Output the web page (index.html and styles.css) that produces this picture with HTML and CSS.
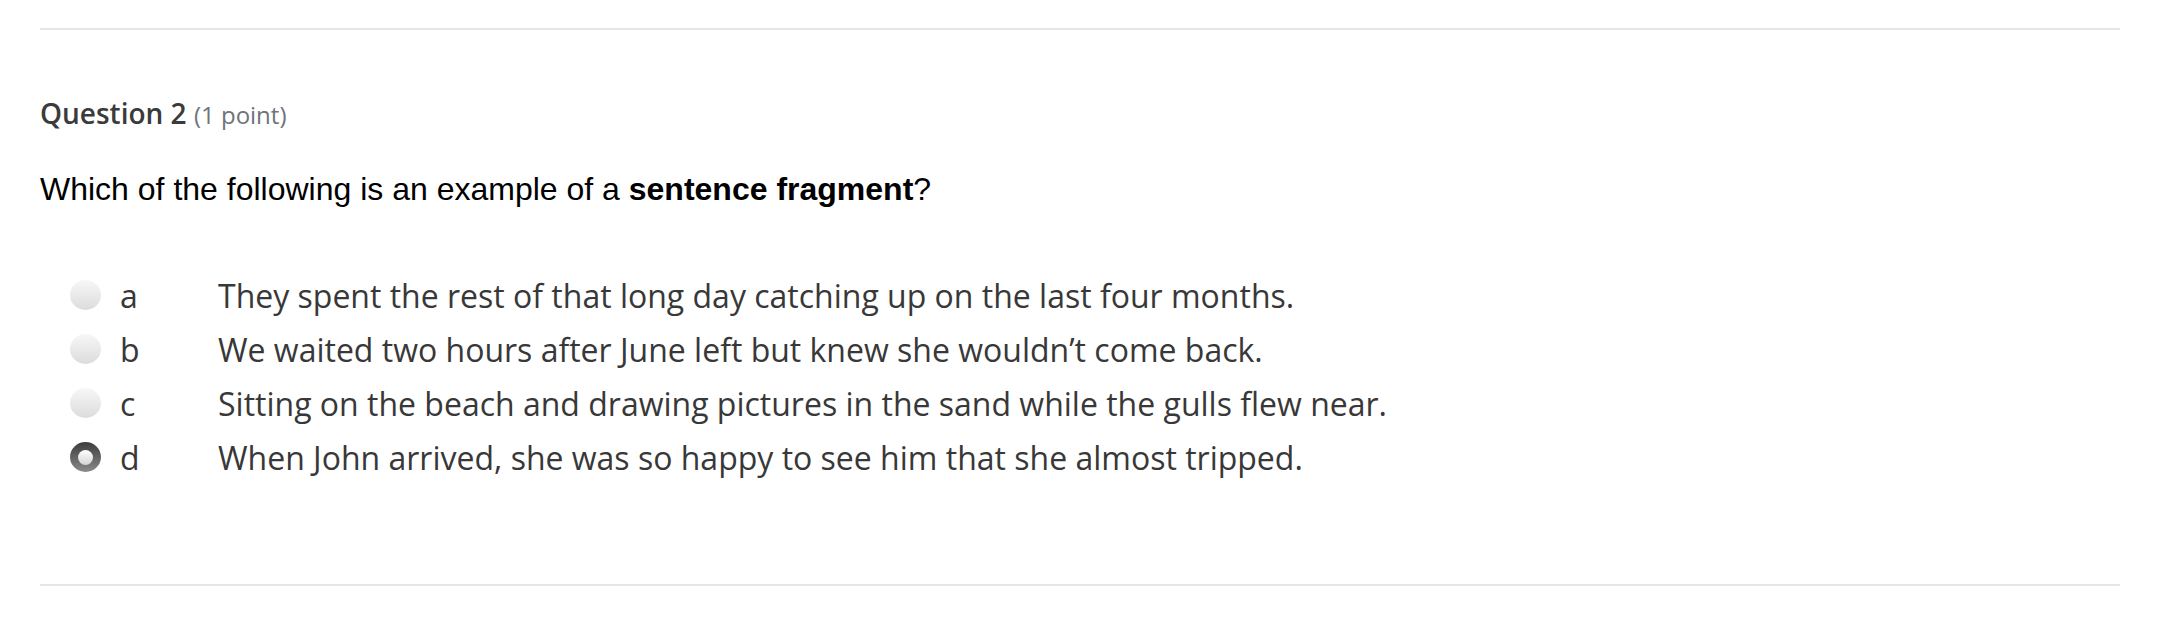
FILE: index.html
```html
<!DOCTYPE html>
<html lang="en">
<head>
<meta charset="utf-8">
<title>Question 2</title>
<link rel="stylesheet" href="styles.css">
</head>
<body>
<div class="quiz">
  <div class="rule"></div>
  <section class="question">
    <h2 class="q-title">Question 2 <span class="q-points">(1 point)</span></h2>
    <p class="q-text">Which of the following is an example of a <strong>sentence fragment</strong>?</p>
    <ul class="options">
      <li class="option"><span class="radio"></span><span class="letter">a</span><span class="answer">They spent the rest of that long day catching up on the last four months.</span></li>
      <li class="option"><span class="radio"></span><span class="letter">b</span><span class="answer">We waited two hours after June left but knew she wouldn’t come back.</span></li>
      <li class="option"><span class="radio"></span><span class="letter">c</span><span class="answer">Sitting on the beach and drawing pictures in the sand while the gulls flew near.</span></li>
      <li class="option"><span class="radio checked"></span><span class="letter">d</span><span class="answer">When John arrived, she was so happy to see him that she almost tripped.</span></li>
    </ul>
  </section>
  <div class="rule bottom"></div>
</div>
</body>
</html>
```
FILE: styles.css
```css
html, body {
  margin: 0;
  padding: 0;
  background: #ffffff;
}
.quiz {
  padding: 28px 40px 0;
}
.rule {
  height: 2px;
  background: #e6e6e6;
}
.rule.bottom {
  margin-top: 100px;
  box-shadow: 0 -6px 0 -4px #f7f7f7;
}
.question {
  padding: 0;
}
.q-title {
  margin: 64px 0 0;
  font-family: "Open Sans", sans-serif;
  font-weight: 600;
  font-size: 28px;
  line-height: 38px;
  color: #3b3b3b;
}
.q-points {
  font-weight: 400;
  font-size: 24px;
  color: #6e747a;
}
.q-text {
  margin: 36px 0 0;
  font-family: "Liberation Sans", Arial, sans-serif;
  font-size: 32px;
  line-height: 38px;
  color: #000;
}
.q-text strong {
  font-weight: 700;
}
.options {
  list-style: none;
  margin: 60px 0 0;
  padding: 0;
}
.option {
  display: flex;
  align-items: center;
  height: 54px;
  font-family: "Open Sans", sans-serif;
  font-size: 32px;
  color: #383838;
}
.radio {
  width: 31px;
  height: 30px;
  border-radius: 50%;
  margin-left: 30px;
  background: linear-gradient(#f7f7f7, #dcdcdc);
  flex: none;
  position: relative;
}
.radio.checked {
  background: linear-gradient(#3c3c3c, #8a8a8a);
}
.radio.checked::after {
  content: "";
  position: absolute;
  left: 8px;
  top: 7.5px;
  width: 15px;
  height: 15px;
  border-radius: 50%;
  background: linear-gradient(#ffffff, #d4d4d4);
}
.letter {
  width: 98px;
  margin-left: 19px;
  flex: none;
}
.answer {
  white-space: nowrap;
}
```
